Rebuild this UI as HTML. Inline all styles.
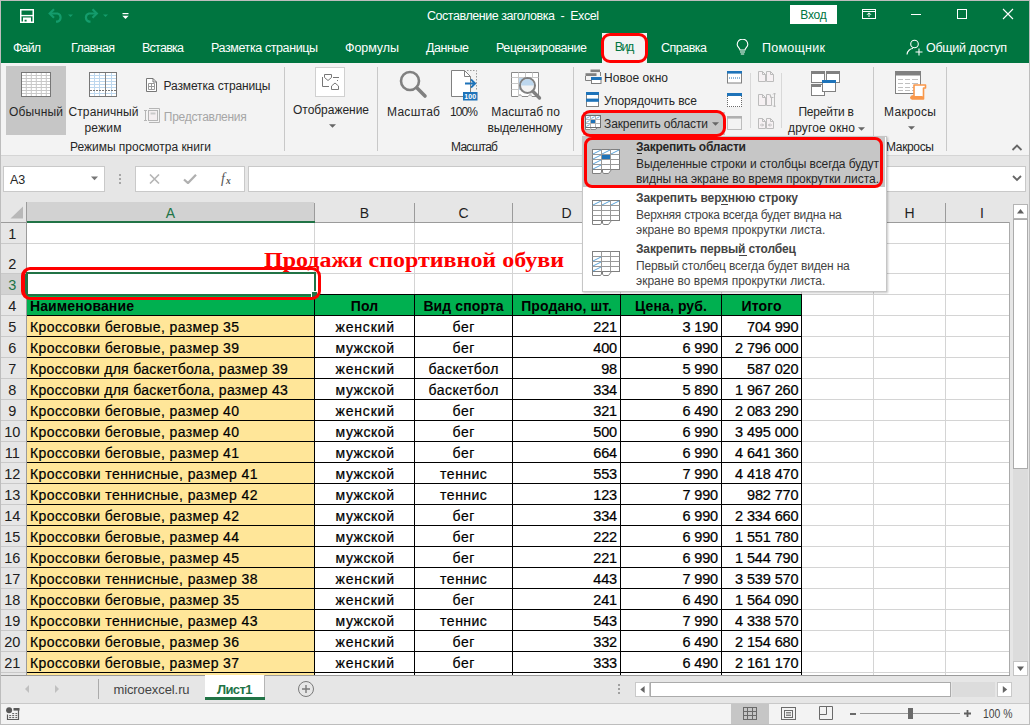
<!DOCTYPE html>
<html lang="ru"><head><meta charset="utf-8"><title>Excel</title>
<style>
html,body{margin:0;padding:0;}
body{width:1030px;height:725px;position:relative;overflow:hidden;background:#fff;font-family:'Liberation Sans', sans-serif;}
#app{position:absolute;left:0;top:0;width:1030px;height:725px;overflow:hidden;}
#app div,#app svg,#app span.t{position:absolute;box-sizing:border-box;}
span.t{white-space:pre;line-height:normal;}
</style></head><body><div id="app">
<div style="left:0px;top:0px;width:1030px;height:725px;background:#f3f3f3;"></div>
<div style="left:0px;top:0px;width:1030px;height:63px;background:#007540;"></div>
<span class="t" style="font:normal 12.5px 'Liberation Sans', sans-serif;color:#ffffff;letter-spacing:-0.456px;left:427.00px;top:8.69px;">Составление заголовка  -  Excel</span>
<div style="left:790px;top:5px;width:47px;height:19px;background:#ffffff;"></div>
<span class="t" style="font:normal 12px 'Liberation Sans', sans-serif;color:#007540;letter-spacing:-0.181px;left:800.19px;top:8.14px;">Вход</span>
<span class="t" style="font:normal 12.5px 'Liberation Sans', sans-serif;color:#ffffff;letter-spacing:-0.911px;left:13.00px;top:40.69px;">Файл</span>
<span class="t" style="font:normal 12.5px 'Liberation Sans', sans-serif;color:#ffffff;letter-spacing:-0.596px;left:71.00px;top:40.69px;">Главная</span>
<span class="t" style="font:normal 12.5px 'Liberation Sans', sans-serif;color:#ffffff;letter-spacing:-0.745px;left:142.00px;top:40.69px;">Вставка</span>
<span class="t" style="font:normal 12.5px 'Liberation Sans', sans-serif;color:#ffffff;letter-spacing:-0.400px;left:211.00px;top:40.69px;">Разметка страницы</span>
<span class="t" style="font:normal 12.5px 'Liberation Sans', sans-serif;color:#ffffff;letter-spacing:-0.068px;left:345.00px;top:40.69px;">Формулы</span>
<span class="t" style="font:normal 12.5px 'Liberation Sans', sans-serif;color:#ffffff;letter-spacing:-0.434px;left:426.00px;top:40.69px;">Данные</span>
<span class="t" style="font:normal 12.5px 'Liberation Sans', sans-serif;color:#ffffff;letter-spacing:-0.425px;left:496.00px;top:40.69px;">Рецензирование</span>
<span class="t" style="font:normal 12.5px 'Liberation Sans', sans-serif;color:#ffffff;letter-spacing:-0.508px;left:661.00px;top:40.69px;">Справка</span>
<span class="t" style="font:normal 12.5px 'Liberation Sans', sans-serif;color:#ffffff;letter-spacing:0.268px;left:762.00px;top:40.69px;">Помощник</span>
<span class="t" style="font:normal 12.5px 'Liberation Sans', sans-serif;color:#ffffff;letter-spacing:-0.271px;left:926.00px;top:40.69px;">Общий доступ</span>
<div style="left:602px;top:33px;width:45px;height:30px;background:#f3f3f3;"></div>
<span class="t" style="font:normal 12.5px 'Liberation Sans', sans-serif;color:#007540;letter-spacing:-1.562px;left:614.70px;top:40.49px;">Вид</span>
<div style="left:0px;top:63px;width:1030px;height:92px;background:#f3f3f3;"></div>
<div style="left:0px;top:155px;width:1030px;height:1px;background:#d5d5d5;"></div>
<div style="left:284px;top:67px;width:1px;height:84px;background:#c8c8c8;"></div>
<div style="left:377px;top:67px;width:1px;height:84px;background:#c8c8c8;"></div>
<div style="left:573px;top:67px;width:1px;height:84px;background:#c8c8c8;"></div>
<div style="left:873px;top:67px;width:1px;height:84px;background:#c8c8c8;"></div>
<div style="left:946px;top:67px;width:1px;height:84px;background:#c8c8c8;"></div>
<div style="left:6px;top:66px;width:60px;height:69px;background:#c6c6c6;"></div>
<span class="t" style="font:normal 12px 'Liberation Sans', sans-serif;color:#262626;letter-spacing:0.159px;left:9.00px;top:104.74px;">Обычный</span>
<span class="t" style="font:normal 12px 'Liberation Sans', sans-serif;color:#262626;letter-spacing:0.106px;left:68.50px;top:104.74px;">Страничный</span>
<span class="t" style="font:normal 12px 'Liberation Sans', sans-serif;color:#262626;letter-spacing:0.199px;left:84.50px;top:120.54px;">режим</span>
<span class="t" style="font:normal 12px 'Liberation Sans', sans-serif;color:#262626;letter-spacing:-0.117px;left:163.50px;top:78.84px;">Разметка страницы</span>
<span class="t" style="font:normal 12px 'Liberation Sans', sans-serif;color:#a6a6a6;letter-spacing:-0.280px;left:163.80px;top:110.14px;">Представления</span>
<span class="t" style="font:normal 12px 'Liberation Sans', sans-serif;color:#262626;letter-spacing:-0.015px;left:70.00px;top:140.14px;">Режимы просмотра книги</span>
<div style="left:315px;top:67px;width:30px;height:30px;background:#ffffff;border:1px solid #d0d0d0;"></div>
<span class="t" style="font:normal 12px 'Liberation Sans', sans-serif;color:#262626;letter-spacing:-0.030px;left:293.00px;top:102.94px;">Отображение</span>
<span class="t" style="font:normal 12px 'Liberation Sans', sans-serif;color:#262626;letter-spacing:0.276px;left:387.00px;top:104.74px;">Масштаб</span>
<span class="t" style="font:normal 12px 'Liberation Sans', sans-serif;color:#262626;letter-spacing:-0.901px;left:450.00px;top:104.74px;">100%</span>
<span class="t" style="font:normal 12px 'Liberation Sans', sans-serif;color:#262626;letter-spacing:0.071px;left:491.35px;top:104.74px;">Масштаб по</span>
<span class="t" style="font:normal 12px 'Liberation Sans', sans-serif;color:#262626;letter-spacing:-0.127px;left:487.50px;top:120.54px;">выделенному</span>
<span class="t" style="font:normal 12px 'Liberation Sans', sans-serif;color:#262626;letter-spacing:-0.724px;left:451.00px;top:140.14px;">Масштаб</span>
<span class="t" style="font:normal 12px 'Liberation Sans', sans-serif;color:#262626;letter-spacing:0.056px;left:604.00px;top:71.14px;">Новое окно</span>
<span class="t" style="font:normal 12px 'Liberation Sans', sans-serif;color:#262626;letter-spacing:-0.047px;left:604.00px;top:94.14px;">Упорядочить все</span>
<div style="left:583px;top:112px;width:142px;height:23px;background:#c6c6c6;"></div>
<span class="t" style="font:normal 12px 'Liberation Sans', sans-serif;color:#262626;letter-spacing:-0.105px;left:604.00px;top:117.14px;">Закрепить области</span>
<span class="t" style="font:normal 12px 'Liberation Sans', sans-serif;color:#262626;letter-spacing:-0.221px;left:798.45px;top:104.74px;">Перейти в</span>
<span class="t" style="font:normal 12px 'Liberation Sans', sans-serif;color:#262626;letter-spacing:0.144px;left:788.00px;top:120.54px;">другое окно</span>
<span class="t" style="font:normal 12px 'Liberation Sans', sans-serif;color:#262626;letter-spacing:0.328px;left:884.00px;top:104.74px;">Макросы</span>
<span class="t" style="font:normal 12px 'Liberation Sans', sans-serif;color:#262626;letter-spacing:-0.339px;left:886.00px;top:140.14px;">Макросы</span>
<svg style="left:20px;top:9px;" width="14" height="14" viewBox="0 0 14 14"><path d="M0.75 0.75H13.25V13.25H0.75Z" fill="none" stroke="#fff" stroke-width="1.5"/><path d="M1 6.6H13" stroke="#fff" stroke-width="1.4"/><path d="M3 8.6H11V13H6.6V10.8H4.6V13H3Z" fill="#fff"/></svg>
<svg style="left:48px;top:8px;" width="26" height="15" viewBox="0 0 26 15"><path d="M2 5.5 H9.5 A4.2 4.2 0 0 1 9.5 13.6 H8" fill="none" stroke="#149c6c" stroke-width="2.2"/><path d="M6 1.2 L1.7 5.5 L6 9.8" fill="none" stroke="#149c6c" stroke-width="2.2"/><path d="M20 6.5 L25 6.5 L22.5 9Z" fill="#149c6c"/></svg>
<svg style="left:83px;top:8px;" width="26" height="15" viewBox="0 0 26 15"><path d="M13.5 5.5 H6 A4.2 4.2 0 0 0 6 13.6 H7.5" fill="none" stroke="#149c6c" stroke-width="2.2"/><path d="M9.5 1.2 L13.8 5.5 L9.5 9.8" fill="none" stroke="#149c6c" stroke-width="2.2"/><path d="M20 6.5 L25 6.5 L22.5 9Z" fill="#149c6c"/></svg>
<svg style="left:122px;top:12px;" width="8" height="8" viewBox="0 0 8 8"><rect x="0.5" y="1" width="6" height="1.2" fill="#fff"/><path d="M0.3 3.8 L6.7 3.8 L3.5 7Z" fill="#fff"/></svg>
<svg style="left:862px;top:8px;" width="15" height="12" viewBox="0 0 15 12"><rect x="0.5" y="1.5" width="13" height="9" fill="none" stroke="#fff"/><path d="M0.5 3.5H13.5" stroke="#fff"/><path d="M7 9V5M5 6.8 L7 4.8 L9 6.8" fill="none" stroke="#fff"/></svg>
<div style="left:911px;top:14px;width:10px;height:1px;background:#ffffff;"></div>
<svg style="left:957px;top:9px;" width="10" height="10" viewBox="0 0 10 10"><rect x="0.5" y="0.5" width="9" height="9" fill="none" stroke="#fff"/></svg>
<svg style="left:1002px;top:8px;" width="12" height="12" viewBox="0 0 12 12"><path d="M1 1L11 11M11 1L1 11" stroke="#fff" stroke-width="1.1"/></svg>
<svg style="left:736px;top:39px;" width="13" height="17" viewBox="0 0 13 17"><path d="M4 11 C4 9 1.2 8 1.2 5.4 A5.3 5.3 0 0 1 11.8 5.4 C11.8 8 9 9 9 11 Z" fill="none" stroke="#fff" stroke-width="1.1"/><path d="M4 13H9M4.8 15H8.2" stroke="#fff" stroke-width="1.1"/></svg>
<svg style="left:906px;top:39px;" width="18" height="17" viewBox="0 0 18 17"><circle cx="8.5" cy="5" r="3.8" fill="none" stroke="#fff" stroke-width="1.1"/><path d="M1 15.5 C1.5 11.5 4.5 9.5 7 9.5" fill="none" stroke="#fff" stroke-width="1.1"/><path d="M9.5 13H16.5M13 9.5V16.5" stroke="#fff" stroke-width="1.1"/></svg>
<svg style="left:21px;top:72px;" width="30" height="25" viewBox="0 0 30 25"><rect x="0.5" y="0.5" width="29" height="24" fill="#fff" stroke="#777"/><rect x="4.8" y="1" width="1" height="23" fill="#c8c8c8"/><rect x="9.8" y="1" width="1" height="23" fill="#c8c8c8"/><rect x="14.8" y="1" width="1" height="23" fill="#c8c8c8"/><rect x="19.8" y="1" width="1" height="23" fill="#c8c8c8"/><rect x="24.8" y="1" width="1" height="23" fill="#c8c8c8"/><rect x="1" y="3.0" width="28" height="1" fill="#c8c8c8"/><rect x="1" y="6.0" width="28" height="1" fill="#c8c8c8"/><rect x="1" y="9.0" width="28" height="1" fill="#c8c8c8"/><rect x="1" y="12.0" width="28" height="1" fill="#c8c8c8"/><rect x="1" y="15.0" width="28" height="1" fill="#c8c8c8"/><rect x="1" y="18.0" width="28" height="1" fill="#c8c8c8"/><rect x="1" y="21.0" width="28" height="1" fill="#c8c8c8"/></svg>
<svg style="left:89px;top:72px;" width="28" height="25" viewBox="0 0 28 25"><rect x="0.5" y="0.5" width="27" height="24" fill="#fff" stroke="#777"/><rect x="5" y="1" width="1" height="23" fill="#bdd7ee"/><rect x="10" y="1" width="1" height="23" fill="#bdd7ee"/><rect x="22" y="1" width="1" height="23" fill="#bdd7ee"/><rect x="1" y="3" width="26" height="1" fill="#bdd7ee"/><rect x="1" y="6" width="26" height="1" fill="#bdd7ee"/><rect x="1" y="9" width="26" height="1" fill="#bdd7ee"/><rect x="1" y="12" width="26" height="1" fill="#bdd7ee"/><rect x="1" y="15" width="26" height="1" fill="#bdd7ee"/><rect x="1" y="21" width="26" height="1" fill="#bdd7ee"/><rect x="16" y="1" width="1" height="23" fill="#858585"/><path d="M1 18.5H27" stroke="#777" stroke-dasharray="2 1"/></svg>
<svg style="left:146px;top:78px;" width="11" height="14" viewBox="0 0 11 14"><path d="M0.5 0.5H7L10.5 4V13.5H0.5Z" fill="#fff" stroke="#777"/><path d="M7 0.5V4H10.5" fill="none" stroke="#777"/><path d="M2.5 5.5H8.5V11.5H2.5ZM5.5 5.5V11.5M2.5 8.5H8.5" fill="none" stroke="#999"/></svg>
<svg style="left:144px;top:107px;" width="17" height="17" viewBox="0 0 17 17"><path d="M1.5 3V14M0 3.5H3M0 13.5H3" stroke="#b5b5b5" fill="none"/><path d="M5 1.5H15.5V15.5H5" fill="none" stroke="#b5b5b5"/><rect x="4.5" y="3.5" width="9" height="10" fill="#f4eef0" stroke="#b5b5b5"/><rect x="6.5" y="5.5" width="5" height="2" fill="#c9c9c9"/></svg>
<svg style="left:321px;top:73px;" width="20" height="18" viewBox="0 0 20 18"><path d="M3.5 1.5H10.5V4.5L7 7.5L3.5 4.5Z" fill="none" stroke="#777"/><path d="M12 4.5H18" stroke="#777"/><path d="M1.5 4V13.5H8" fill="none" stroke="#777"/><path d="M10.5 16.5H17.5V13L14 10L10.5 13Z" fill="none" stroke="#777"/><path d="M16.5 7V9" stroke="#777" stroke-dasharray="1 1"/></svg>
<svg style="left:328.5px;top:123.5px;" width="7" height="4" viewBox="0 0 7 4"><path d="M0 0.3H7L3.5 3.8Z" fill="#666"/></svg>
<svg style="left:398px;top:69px;" width="32" height="32" viewBox="0 0 32 32"><circle cx="12" cy="12" r="9" fill="none" stroke="#808080" stroke-width="2.6"/><path d="M18.8 18.8 L27 27" stroke="#808080" stroke-width="3.6" stroke-linecap="round"/></svg>
<svg style="left:450px;top:69px;" width="29" height="33" viewBox="0 0 29 33"><path d="M1.5 1.5H14.5L20.5 7.5V27.5H1.5Z" fill="#fff" stroke="#808080"/><path d="M14.5 1.5V7.5H20.5" fill="none" stroke="#808080"/><path d="M17 1.5H26.5V22" fill="none" stroke="#999" stroke-dasharray="1.5 1.5"/><path d="M15 14.5H25M21 10.5L25.2 14.5L21 18.5" fill="none" stroke="#1e73b9" stroke-width="1.8"/><rect x="13" y="23" width="14.5" height="8.5" fill="#1e73b9"/><text x="20.2" y="30.2" font-family="Liberation Sans, sans-serif" font-weight="bold" font-size="7" fill="#fff" text-anchor="middle">100</text></svg>
<svg style="left:511px;top:72px;" width="31" height="29" viewBox="0 0 31 29"><path d="M0.5 0.5H27.5V24.5H21L19 22.5L17 24.5H11L9 22.5L7 24.5H0.5Z" fill="#fff" stroke="#8a8a8a"/><path d="M7.5 0.5V24M14.5 0.5V5M21.5 0.5V5M0.5 5.5H27.5M0.5 11.5H8M0.5 17.5H8M20 5.5V24" fill="none" stroke="#c8c8c8"/><rect x="8" y="6" width="12" height="12" fill="#bdd7ee"/><circle cx="16.5" cy="13.5" r="7.5" fill="#f3f3f3" stroke="#808080" stroke-width="2"/><path d="M10 13.5 A6.5 6.5 0 0 1 23 13.5Z" fill="#bdd7ee"/><path d="M22 19.5 L28.5 26" stroke="#808080" stroke-width="3.4" stroke-linecap="round"/></svg>
<svg style="left:584px;top:69px;" width="18" height="16" viewBox="0 0 18 16"><rect x="6.5" y="0.5" width="9.5" height="2.6" fill="#808080"/><path d="M16.5 3V7" stroke="#808080"/><rect x="1.5" y="4.2" width="11" height="2.8" fill="#808080"/><path d="M1.5 7V11.5H7" fill="none" stroke="#808080"/><rect x="7.5" y="8.5" width="9.5" height="6" fill="#fff" stroke="#808080"/><rect x="7" y="8" width="10.5" height="3" fill="#1e73b9"/></svg>
<svg style="left:586px;top:92px;" width="13" height="15" viewBox="0 0 13 15"><rect x="0.5" y="0.5" width="12" height="14" fill="#fff" stroke="#808080"/><rect x="0" y="0" width="13" height="3" fill="#1e73b9"/><rect x="0" y="6.6" width="13" height="3.2" fill="#1e73b9"/></svg>
<svg style="left:727px;top:71px;" width="15" height="13" viewBox="0 0 15 13"><rect x="0.5" y="0.5" width="14" height="11.5" fill="#fff" stroke="#808080"/><rect x="0" y="0" width="15" height="2.6" fill="#1e73b9"/><path d="M2 7H13" stroke="#1e73b9" stroke-dasharray="1 1"/></svg>
<svg style="left:727px;top:93px;" width="15" height="15" viewBox="0 0 15 15"><rect x="0.5" y="0.5" width="14" height="13.5" fill="#fff" stroke="none"/><path d="M0.5 3V14M14.5 3V14" stroke="#6a6a6a" stroke-dasharray="1 1"/><path d="M0 13.5H15" stroke="#6a6a6a" stroke-dasharray="1 1"/><rect x="0" y="0" width="15" height="3" fill="#1e73b9"/></svg>
<svg style="left:727px;top:116px;" width="15" height="14" viewBox="0 0 15 14"><rect x="0.5" y="0.5" width="14" height="13" fill="#f3f3f3" stroke="#bdbdbd"/><rect x="0" y="0" width="15" height="2.6" fill="#b0b0b0"/></svg>
<div style="left:750px;top:73px;width:1px;height:55px;background:#d8d8d8;"></div>
<div style="left:781px;top:73px;width:1px;height:55px;background:#d8d8d8;"></div>
<svg style="left:758px;top:71px;" width="17" height="12" viewBox="0 0 17 12"><path d="M0.5 0.5H4.5L7.5 3.5V10.5H0.5Z M8.5 0.5H12.5L15.5 3.5V10.5H8.5Z" fill="#f6f1f3" stroke="#bcbcbc"/><path d="M4.5 0.5V3.5H7.5M12.5 0.5V3.5H15.5" fill="none" stroke="#bcbcbc"/></svg>
<svg style="left:758px;top:92px;" width="18" height="16" viewBox="0 0 18 16"><path d="M0.5 2.5H4.5L7.5 5.5V13.5H0.5Z M8.5 2.5H11.5L13.5 5.5V13.5H8.5Z" fill="#f6f1f3" stroke="#bcbcbc"/><path d="M4.5 2.5V5.5H7.5M12.5 2.5V5.5H15.5" fill="none" stroke="#bcbcbc"/><path d="M16.5 1V15M15 2.5L16.5 1L18 2.5M15 13.5L16.5 15L18 13.5" fill="none" stroke="#bcbcbc"/></svg>
<svg style="left:758px;top:118px;" width="17" height="12" viewBox="0 0 17 12"><path d="M0.5 0.5H4.5L7.5 3.5V10.5H0.5Z M8.5 0.5H12.5L15.5 3.5V10.5H8.5Z" fill="#f6f1f3" stroke="#bcbcbc"/><path d="M4.5 0.5V3.5H7.5M12.5 0.5V3.5H15.5" fill="none" stroke="#bcbcbc"/><path d="M2 7H5.5M4 5.5L5.5 7L4 8.5M14 7H10.5M12 5.5L10.5 7L12 8.5" fill="none" stroke="#bcbcbc"/></svg>
<svg style="left:811px;top:70px;" width="30" height="27" viewBox="0 0 30 27"><rect x="0.5" y="1.5" width="13" height="11" fill="#fff" stroke="#808080"/><rect x="0" y="1" width="14" height="3" fill="#808080"/><rect x="15.5" y="1.5" width="13" height="11" fill="#fff" stroke="#808080"/><rect x="15" y="1" width="14" height="3" fill="#808080"/><rect x="0.5" y="14.5" width="13" height="11" fill="#fff" stroke="#808080"/><rect x="0" y="14" width="10" height="3" fill="#808080"/><rect x="11.5" y="10.5" width="13" height="11" fill="#fff" stroke="#808080"/><rect x="11" y="10" width="14" height="3" fill="#1e73b9"/></svg>
<svg style="left:857.5px;top:126.5px;" width="7" height="4" viewBox="0 0 7 4"><path d="M0 0.3H7L3.5 3.8Z" fill="#666"/></svg>
<svg style="left:895px;top:71px;" width="32" height="30" viewBox="0 0 32 30"><rect x="0.5" y="0.5" width="25" height="22" fill="#fff" stroke="#808080"/><rect x="0" y="0" width="26" height="4.5" fill="#808080"/><path d="M3 8.5H8M10 8.5H15M17 8.5H23" stroke="#c0c0c0"/><path d="M3 12.5H8M10 12.5H15M17 12.5H23" stroke="#c0c0c0"/><path d="M3 16.5H8M10 16.5H15M17 16.5H23" stroke="#c0c0c0"/><path d="M3 19.5H8M10 19.5H15M17 19.5H23" stroke="#c0c0c0"/><path d="M19 14H30.5V17H28.5V28H17V25H19Z" fill="#fff" stroke="#f9974a" stroke-width="1.6" stroke-linejoin="round"/><path d="M16.5 26.5H27" stroke="#f9974a" stroke-width="3" stroke-linecap="round"/></svg>
<svg style="left:907.5px;top:125.5px;" width="7" height="4" viewBox="0 0 7 4"><path d="M0 0.3H7L3.5 3.8Z" fill="#666"/></svg>
<svg style="left:1011px;top:143px;" width="12" height="8" viewBox="0 0 12 8"><path d="M1.5 7L6 2.5L10.5 7" fill="none" stroke="#666" stroke-width="1.8"/></svg>
<svg style="left:585px;top:115px;" width="16" height="15" viewBox="0 0 16 15"><rect x="0.5" y="0.5" width="15" height="12" fill="#b4b4b4" stroke="#6e6e6e"/><rect x="1" y="1" width="4" height="3" fill="#fff"/><rect x="1" y="5" width="4" height="3" fill="#fff"/><rect x="1" y="9" width="4" height="3" fill="#fff"/><rect x="6" y="1" width="4" height="3" fill="#fff"/><rect x="6" y="5" width="4" height="3" fill="#fff"/><rect x="6" y="9" width="4" height="3" fill="#fff"/><rect x="11" y="1" width="4" height="3" fill="#fff"/><rect x="11" y="5" width="4" height="3" fill="#fff"/><rect x="11" y="9" width="4" height="3" fill="#fff"/><path d="M1.3 3.4 L4.7 1.6" stroke="#5ba3d9" stroke-width="0.9"/><path d="M6.3 3.4 L9.7 1.6" stroke="#5ba3d9" stroke-width="0.9"/><path d="M11.3 3.4 L14.7 1.6" stroke="#5ba3d9" stroke-width="0.9"/><path d="M1.3 7.4 L4.7 5.6" stroke="#5ba3d9" stroke-width="0.9"/><path d="M1.3 11.4 L4.7 9.6" stroke="#5ba3d9" stroke-width="0.9"/><rect x="6" y="5" width="4" height="3" fill="#1e73b9"/><rect x="1" y="13" width="4" height="1.2" fill="#fff"/><rect x="6.5" y="13" width="4" height="1.2" fill="#fff"/><path d="M0.5 12.5V14.6H5.2M6 14.6H10.5L12 13" fill="none" stroke="#7a7a7a" stroke-width="0.9"/></svg>
<svg style="left:711.5px;top:122.0px;" width="7" height="4" viewBox="0 0 7 4"><path d="M0 0.3H7L3.5 3.8Z" fill="#666"/></svg>
<div style="left:0px;top:156px;width:1030px;height:46px;background:#e6e6e6;"></div>
<div style="left:3px;top:166px;width:102px;height:26px;background:#ffffff;border:1px solid #c9c9c9;"></div>
<span class="t" style="font:normal 12.5px 'Liberation Sans', sans-serif;color:#262626;left:10.00px;top:172.69px;">A3</span>
<div style="left:135px;top:166px;width:110px;height:26px;background:#ffffff;border:1px solid #c9c9c9;"></div>
<div style="left:248px;top:166px;width:778px;height:26px;background:#ffffff;border:1px solid #c9c9c9;"></div>
<svg style="left:91px;top:176px;" width="8" height="5" viewBox="0 0 8 5"><path d="M0 0.5H7L3.5 4.2Z" fill="#777"/></svg>
<svg style="left:119px;top:174px;" width="3" height="10" viewBox="0 0 3 10"><rect x="0" y="0" width="2" height="2" fill="#a6a6a6"/><rect x="0" y="4" width="2" height="2" fill="#a6a6a6"/><rect x="0" y="8" width="2" height="2" fill="#a6a6a6"/></svg>
<svg style="left:149px;top:174px;" width="11" height="10" viewBox="0 0 11 10"><path d="M1 0.5L10 9.5M10 0.5L1 9.5" stroke="#b5b5b5" stroke-width="1.6"/></svg>
<svg style="left:183px;top:174px;" width="14" height="10" viewBox="0 0 14 10"><path d="M1 5.5L5 9L13 0.8" fill="none" stroke="#b0b0b0" stroke-width="2.3"/></svg>
<span class="t" style="font:normal 14px 'Liberation Serif', serif;color:#555;left:221.00px;top:171.03px;font-style:italic;">f</span>
<span class="t" style="font:bold 9.5px 'Liberation Serif', serif;color:#555;left:226.00px;top:175.54px;font-style:italic;">x</span>
<svg style="left:1012px;top:175px;" width="10" height="7" viewBox="0 0 10 7"><path d="M1 1L5 5L9 1" fill="none" stroke="#666" stroke-width="1.8"/></svg>
<div style="left:0px;top:202px;width:1010px;height:474px;background:#ffffff;"></div>
<div style="left:0px;top:202px;width:1010px;height:21px;background:#e6e6e6;"></div>
<div style="left:0px;top:202px;width:27px;height:474px;background:#e6e6e6;"></div>
<div style="left:314px;top:223px;width:1px;height:453px;background:#d4d4d4;"></div>
<div style="left:414px;top:223px;width:1px;height:453px;background:#d4d4d4;"></div>
<div style="left:512px;top:223px;width:1px;height:453px;background:#d4d4d4;"></div>
<div style="left:620px;top:223px;width:1px;height:453px;background:#d4d4d4;"></div>
<div style="left:721px;top:223px;width:1px;height:453px;background:#d4d4d4;"></div>
<div style="left:801px;top:223px;width:1px;height:453px;background:#d4d4d4;"></div>
<div style="left:873px;top:223px;width:1px;height:453px;background:#d4d4d4;"></div>
<div style="left:945px;top:223px;width:1px;height:453px;background:#d4d4d4;"></div>
<div style="left:1009px;top:223px;width:1px;height:453px;background:#d4d4d4;"></div>
<div style="left:27px;top:243px;width:983px;height:1px;background:#d4d4d4;"></div>
<div style="left:27px;top:273px;width:983px;height:1px;background:#d4d4d4;"></div>
<div style="left:27px;top:294px;width:983px;height:1px;background:#d4d4d4;"></div>
<div style="left:27px;top:315px;width:983px;height:1px;background:#d4d4d4;"></div>
<div style="left:27px;top:336px;width:983px;height:1px;background:#d4d4d4;"></div>
<div style="left:27px;top:357px;width:983px;height:1px;background:#d4d4d4;"></div>
<div style="left:27px;top:378px;width:983px;height:1px;background:#d4d4d4;"></div>
<div style="left:27px;top:399px;width:983px;height:1px;background:#d4d4d4;"></div>
<div style="left:27px;top:420px;width:983px;height:1px;background:#d4d4d4;"></div>
<div style="left:27px;top:441px;width:983px;height:1px;background:#d4d4d4;"></div>
<div style="left:27px;top:462px;width:983px;height:1px;background:#d4d4d4;"></div>
<div style="left:27px;top:483px;width:983px;height:1px;background:#d4d4d4;"></div>
<div style="left:27px;top:504px;width:983px;height:1px;background:#d4d4d4;"></div>
<div style="left:27px;top:525px;width:983px;height:1px;background:#d4d4d4;"></div>
<div style="left:27px;top:546px;width:983px;height:1px;background:#d4d4d4;"></div>
<div style="left:27px;top:567px;width:983px;height:1px;background:#d4d4d4;"></div>
<div style="left:27px;top:588px;width:983px;height:1px;background:#d4d4d4;"></div>
<div style="left:27px;top:609px;width:983px;height:1px;background:#d4d4d4;"></div>
<div style="left:27px;top:630px;width:983px;height:1px;background:#d4d4d4;"></div>
<div style="left:27px;top:651px;width:983px;height:1px;background:#d4d4d4;"></div>
<div style="left:27px;top:672px;width:983px;height:1px;background:#d4d4d4;"></div>
<div style="left:0px;top:222px;width:1010px;height:1px;background:#9b9b9b;"></div>
<div style="left:26px;top:202px;width:1px;height:474px;background:#9b9b9b;"></div>
<div style="left:314px;top:203px;width:1px;height:19px;background:#9b9b9b;"></div>
<div style="left:414px;top:203px;width:1px;height:19px;background:#9b9b9b;"></div>
<div style="left:512px;top:203px;width:1px;height:19px;background:#9b9b9b;"></div>
<div style="left:620px;top:203px;width:1px;height:19px;background:#9b9b9b;"></div>
<div style="left:721px;top:203px;width:1px;height:19px;background:#9b9b9b;"></div>
<div style="left:801px;top:203px;width:1px;height:19px;background:#9b9b9b;"></div>
<div style="left:873px;top:203px;width:1px;height:19px;background:#9b9b9b;"></div>
<div style="left:945px;top:203px;width:1px;height:19px;background:#9b9b9b;"></div>
<div style="left:27px;top:202px;width:287px;height:19px;background:#d2d2d2;"></div>
<div style="left:27px;top:221px;width:288px;height:2px;background:#217346;"></div>
<div style="left:0px;top:274px;width:25px;height:20px;background:#d2d2d2;"></div>
<div style="left:25px;top:274px;width:2px;height:21px;background:#217346;"></div>
<span class="t" style="font:normal 14px 'Liberation Sans', sans-serif;color:#217346;left:165.83px;top:204.93px;">A</span>
<span class="t" style="font:normal 14px 'Liberation Sans', sans-serif;color:#1f1f1f;left:359.83px;top:204.93px;">B</span>
<span class="t" style="font:normal 14px 'Liberation Sans', sans-serif;color:#1f1f1f;left:458.44px;top:204.93px;">C</span>
<span class="t" style="font:normal 14px 'Liberation Sans', sans-serif;color:#1f1f1f;left:561.44px;top:204.93px;">D</span>
<span class="t" style="font:normal 14px 'Liberation Sans', sans-serif;color:#1f1f1f;left:666.33px;top:204.93px;">E</span>
<span class="t" style="font:normal 14px 'Liberation Sans', sans-serif;color:#1f1f1f;left:757.22px;top:204.93px;">F</span>
<span class="t" style="font:normal 14px 'Liberation Sans', sans-serif;color:#1f1f1f;left:832.05px;top:204.93px;">G</span>
<span class="t" style="font:normal 14px 'Liberation Sans', sans-serif;color:#1f1f1f;left:904.44px;top:204.93px;">H</span>
<span class="t" style="font:normal 14px 'Liberation Sans', sans-serif;color:#1f1f1f;left:980.05px;top:204.93px;">I</span>
<span class="t" style="font:normal 14.5px 'Liberation Sans', sans-serif;color:#202020;letter-spacing:0.000px;left:8.26px;top:225.68px;">1</span>
<span class="t" style="font:normal 14.5px 'Liberation Sans', sans-serif;color:#202020;letter-spacing:0.000px;left:8.26px;top:255.68px;">2</span>
<span class="t" style="font:normal 14.5px 'Liberation Sans', sans-serif;color:#217346;letter-spacing:0.000px;left:8.26px;top:276.68px;">3</span>
<span class="t" style="font:normal 14.5px 'Liberation Sans', sans-serif;color:#202020;letter-spacing:0.000px;left:8.26px;top:297.68px;">4</span>
<span class="t" style="font:normal 14.5px 'Liberation Sans', sans-serif;color:#202020;letter-spacing:0.000px;left:8.26px;top:318.68px;">5</span>
<span class="t" style="font:normal 14.5px 'Liberation Sans', sans-serif;color:#202020;letter-spacing:0.000px;left:8.26px;top:339.68px;">6</span>
<span class="t" style="font:normal 14.5px 'Liberation Sans', sans-serif;color:#202020;letter-spacing:0.000px;left:8.26px;top:360.68px;">7</span>
<span class="t" style="font:normal 14.5px 'Liberation Sans', sans-serif;color:#202020;letter-spacing:0.000px;left:8.26px;top:381.68px;">8</span>
<span class="t" style="font:normal 14.5px 'Liberation Sans', sans-serif;color:#202020;letter-spacing:0.000px;left:8.26px;top:402.68px;">9</span>
<span class="t" style="font:normal 14.5px 'Liberation Sans', sans-serif;color:#202020;letter-spacing:0.000px;left:4.23px;top:423.68px;">10</span>
<span class="t" style="font:normal 14.5px 'Liberation Sans', sans-serif;color:#202020;letter-spacing:0.000px;left:4.77px;top:444.68px;">11</span>
<span class="t" style="font:normal 14.5px 'Liberation Sans', sans-serif;color:#202020;letter-spacing:0.000px;left:4.23px;top:465.68px;">12</span>
<span class="t" style="font:normal 14.5px 'Liberation Sans', sans-serif;color:#202020;letter-spacing:0.000px;left:4.23px;top:486.68px;">13</span>
<span class="t" style="font:normal 14.5px 'Liberation Sans', sans-serif;color:#202020;letter-spacing:0.000px;left:4.23px;top:507.68px;">14</span>
<span class="t" style="font:normal 14.5px 'Liberation Sans', sans-serif;color:#202020;letter-spacing:0.000px;left:4.23px;top:528.68px;">15</span>
<span class="t" style="font:normal 14.5px 'Liberation Sans', sans-serif;color:#202020;letter-spacing:0.000px;left:4.23px;top:549.68px;">16</span>
<span class="t" style="font:normal 14.5px 'Liberation Sans', sans-serif;color:#202020;letter-spacing:0.000px;left:4.23px;top:570.68px;">17</span>
<span class="t" style="font:normal 14.5px 'Liberation Sans', sans-serif;color:#202020;letter-spacing:0.000px;left:4.23px;top:591.68px;">18</span>
<span class="t" style="font:normal 14.5px 'Liberation Sans', sans-serif;color:#202020;letter-spacing:0.000px;left:4.23px;top:612.68px;">19</span>
<span class="t" style="font:normal 14.5px 'Liberation Sans', sans-serif;color:#202020;letter-spacing:0.000px;left:4.23px;top:633.68px;">20</span>
<span class="t" style="font:normal 14.5px 'Liberation Sans', sans-serif;color:#202020;letter-spacing:0.000px;left:4.23px;top:654.68px;">21</span>
<div style="left:0px;top:243px;width:26px;height:1px;background:#c9c9c9;"></div>
<div style="left:0px;top:273px;width:26px;height:1px;background:#c9c9c9;"></div>
<div style="left:0px;top:294px;width:26px;height:1px;background:#c9c9c9;"></div>
<div style="left:0px;top:315px;width:26px;height:1px;background:#c9c9c9;"></div>
<div style="left:0px;top:336px;width:26px;height:1px;background:#c9c9c9;"></div>
<div style="left:0px;top:357px;width:26px;height:1px;background:#c9c9c9;"></div>
<div style="left:0px;top:378px;width:26px;height:1px;background:#c9c9c9;"></div>
<div style="left:0px;top:399px;width:26px;height:1px;background:#c9c9c9;"></div>
<div style="left:0px;top:420px;width:26px;height:1px;background:#c9c9c9;"></div>
<div style="left:0px;top:441px;width:26px;height:1px;background:#c9c9c9;"></div>
<div style="left:0px;top:462px;width:26px;height:1px;background:#c9c9c9;"></div>
<div style="left:0px;top:483px;width:26px;height:1px;background:#c9c9c9;"></div>
<div style="left:0px;top:504px;width:26px;height:1px;background:#c9c9c9;"></div>
<div style="left:0px;top:525px;width:26px;height:1px;background:#c9c9c9;"></div>
<div style="left:0px;top:546px;width:26px;height:1px;background:#c9c9c9;"></div>
<div style="left:0px;top:567px;width:26px;height:1px;background:#c9c9c9;"></div>
<div style="left:0px;top:588px;width:26px;height:1px;background:#c9c9c9;"></div>
<div style="left:0px;top:609px;width:26px;height:1px;background:#c9c9c9;"></div>
<div style="left:0px;top:630px;width:26px;height:1px;background:#c9c9c9;"></div>
<div style="left:0px;top:651px;width:26px;height:1px;background:#c9c9c9;"></div>
<div style="left:0px;top:672px;width:26px;height:1px;background:#c9c9c9;"></div>
<svg style="left:10px;top:206px;" width="14" height="13" viewBox="0 0 14 13"><path d="M13 0.5V12.5H0.5Z" fill="#b8b8b8"/></svg>
<div style="left:27px;top:295px;width:775px;height:20px;background:#00b050;"></div>
<div style="left:27px;top:316px;width:287px;height:360px;background:#ffe699;"></div>
<div style="left:27px;top:294px;width:775px;height:1px;background:#000000;"></div>
<div style="left:27px;top:315px;width:775px;height:1px;background:#000000;"></div>
<div style="left:27px;top:336px;width:775px;height:1px;background:#000000;"></div>
<div style="left:27px;top:357px;width:775px;height:1px;background:#000000;"></div>
<div style="left:27px;top:378px;width:775px;height:1px;background:#000000;"></div>
<div style="left:27px;top:399px;width:775px;height:1px;background:#000000;"></div>
<div style="left:27px;top:420px;width:775px;height:1px;background:#000000;"></div>
<div style="left:27px;top:441px;width:775px;height:1px;background:#000000;"></div>
<div style="left:27px;top:462px;width:775px;height:1px;background:#000000;"></div>
<div style="left:27px;top:483px;width:775px;height:1px;background:#000000;"></div>
<div style="left:27px;top:504px;width:775px;height:1px;background:#000000;"></div>
<div style="left:27px;top:525px;width:775px;height:1px;background:#000000;"></div>
<div style="left:27px;top:546px;width:775px;height:1px;background:#000000;"></div>
<div style="left:27px;top:567px;width:775px;height:1px;background:#000000;"></div>
<div style="left:27px;top:588px;width:775px;height:1px;background:#000000;"></div>
<div style="left:27px;top:609px;width:775px;height:1px;background:#000000;"></div>
<div style="left:27px;top:630px;width:775px;height:1px;background:#000000;"></div>
<div style="left:27px;top:651px;width:775px;height:1px;background:#000000;"></div>
<div style="left:27px;top:672px;width:775px;height:1px;background:#000000;"></div>
<div style="left:314px;top:294px;width:1px;height:382px;background:#000000;"></div>
<div style="left:414px;top:294px;width:1px;height:382px;background:#000000;"></div>
<div style="left:512px;top:294px;width:1px;height:382px;background:#000000;"></div>
<div style="left:620px;top:294px;width:1px;height:382px;background:#000000;"></div>
<div style="left:721px;top:294px;width:1px;height:382px;background:#000000;"></div>
<div style="left:801px;top:294px;width:1px;height:382px;background:#000000;"></div>
<span class="t" style="font:bold 14px 'Liberation Sans', sans-serif;color:#000;letter-spacing:0.112px;left:30.00px;top:298.33px;">Наименование</span>
<span class="t" style="font:bold 14px 'Liberation Sans', sans-serif;color:#000;letter-spacing:0.163px;left:350.75px;top:298.33px;">Пол</span>
<span class="t" style="font:bold 14px 'Liberation Sans', sans-serif;color:#000;letter-spacing:0.106px;left:423.38px;top:298.33px;">Вид спорта</span>
<span class="t" style="font:bold 14px 'Liberation Sans', sans-serif;color:#000;letter-spacing:0.098px;left:521.14px;top:298.33px;">Продано, шт.</span>
<span class="t" style="font:bold 14px 'Liberation Sans', sans-serif;color:#000;letter-spacing:0.095px;left:635.12px;top:298.33px;">Цена, руб.</span>
<span class="t" style="font:bold 14px 'Liberation Sans', sans-serif;color:#000;letter-spacing:0.118px;left:741.52px;top:298.33px;">Итого</span>
<span class="t" style="font:normal 14px 'Liberation Sans', sans-serif;color:#000;letter-spacing:0.383px;left:30.00px;top:319.33px;-webkit-text-stroke:0.22px #000;">Кроссовки беговые, размер 35</span>
<span class="t" style="font:normal 14px 'Liberation Sans', sans-serif;color:#000;letter-spacing:0.791px;left:335.60px;top:319.33px;-webkit-text-stroke:0.22px #000;">женский</span>
<span class="t" style="font:normal 14px 'Liberation Sans', sans-serif;color:#000;letter-spacing:0.571px;left:452.55px;top:319.33px;-webkit-text-stroke:0.22px #000;">бег</span>
<span class="t" style="font:normal 14.5px 'Liberation Sans', sans-serif;color:#000;letter-spacing:-0.182px;left:593.36px;top:318.88px;-webkit-text-stroke:0.22px #000;">221</span>
<span class="t" style="font:normal 14.5px 'Liberation Sans', sans-serif;color:#000;letter-spacing:-0.136px;left:682.45px;top:318.88px;-webkit-text-stroke:0.22px #000;">3 190</span>
<span class="t" style="font:normal 14.5px 'Liberation Sans', sans-serif;color:#000;letter-spacing:-0.131px;left:746.96px;top:318.88px;-webkit-text-stroke:0.22px #000;">704 990</span>
<span class="t" style="font:normal 14px 'Liberation Sans', sans-serif;color:#000;letter-spacing:0.383px;left:30.00px;top:340.33px;-webkit-text-stroke:0.22px #000;">Кроссовки беговые, размер 39</span>
<span class="t" style="font:normal 14px 'Liberation Sans', sans-serif;color:#000;letter-spacing:0.533px;left:335.60px;top:340.33px;-webkit-text-stroke:0.22px #000;">мужской</span>
<span class="t" style="font:normal 14px 'Liberation Sans', sans-serif;color:#000;letter-spacing:0.571px;left:452.55px;top:340.33px;-webkit-text-stroke:0.22px #000;">бег</span>
<span class="t" style="font:normal 14.5px 'Liberation Sans', sans-serif;color:#000;letter-spacing:-0.182px;left:593.36px;top:339.88px;-webkit-text-stroke:0.22px #000;">400</span>
<span class="t" style="font:normal 14.5px 'Liberation Sans', sans-serif;color:#000;letter-spacing:-0.136px;left:682.45px;top:339.88px;-webkit-text-stroke:0.22px #000;">6 990</span>
<span class="t" style="font:normal 14.5px 'Liberation Sans', sans-serif;color:#000;letter-spacing:-0.121px;left:735.05px;top:339.88px;-webkit-text-stroke:0.22px #000;">2 796 000</span>
<span class="t" style="font:normal 14px 'Liberation Sans', sans-serif;color:#000;letter-spacing:0.320px;left:30.00px;top:361.33px;-webkit-text-stroke:0.22px #000;">Кроссовки для баскетбола, размер 39</span>
<span class="t" style="font:normal 14px 'Liberation Sans', sans-serif;color:#000;letter-spacing:0.791px;left:335.60px;top:361.33px;-webkit-text-stroke:0.22px #000;">женский</span>
<span class="t" style="font:normal 14px 'Liberation Sans', sans-serif;color:#000;letter-spacing:0.455px;left:428.59px;top:361.33px;-webkit-text-stroke:0.22px #000;">баскетбол</span>
<span class="t" style="font:normal 14.5px 'Liberation Sans', sans-serif;color:#000;letter-spacing:-0.242px;left:601.30px;top:360.88px;-webkit-text-stroke:0.22px #000;">98</span>
<span class="t" style="font:normal 14.5px 'Liberation Sans', sans-serif;color:#000;letter-spacing:-0.136px;left:682.45px;top:360.88px;-webkit-text-stroke:0.22px #000;">5 990</span>
<span class="t" style="font:normal 14.5px 'Liberation Sans', sans-serif;color:#000;letter-spacing:-0.131px;left:746.96px;top:360.88px;-webkit-text-stroke:0.22px #000;">587 020</span>
<span class="t" style="font:normal 14px 'Liberation Sans', sans-serif;color:#000;letter-spacing:0.320px;left:30.00px;top:382.33px;-webkit-text-stroke:0.22px #000;">Кроссовки для баскетбола, размер 43</span>
<span class="t" style="font:normal 14px 'Liberation Sans', sans-serif;color:#000;letter-spacing:0.533px;left:335.60px;top:382.33px;-webkit-text-stroke:0.22px #000;">мужской</span>
<span class="t" style="font:normal 14px 'Liberation Sans', sans-serif;color:#000;letter-spacing:0.455px;left:428.59px;top:382.33px;-webkit-text-stroke:0.22px #000;">баскетбол</span>
<span class="t" style="font:normal 14.5px 'Liberation Sans', sans-serif;color:#000;letter-spacing:-0.182px;left:593.36px;top:381.88px;-webkit-text-stroke:0.22px #000;">334</span>
<span class="t" style="font:normal 14.5px 'Liberation Sans', sans-serif;color:#000;letter-spacing:-0.136px;left:682.45px;top:381.88px;-webkit-text-stroke:0.22px #000;">5 890</span>
<span class="t" style="font:normal 14.5px 'Liberation Sans', sans-serif;color:#000;letter-spacing:-0.121px;left:735.05px;top:381.88px;-webkit-text-stroke:0.22px #000;">1 967 260</span>
<span class="t" style="font:normal 14px 'Liberation Sans', sans-serif;color:#000;letter-spacing:0.383px;left:30.00px;top:403.33px;-webkit-text-stroke:0.22px #000;">Кроссовки беговые, размер 40</span>
<span class="t" style="font:normal 14px 'Liberation Sans', sans-serif;color:#000;letter-spacing:0.791px;left:335.60px;top:403.33px;-webkit-text-stroke:0.22px #000;">женский</span>
<span class="t" style="font:normal 14px 'Liberation Sans', sans-serif;color:#000;letter-spacing:0.571px;left:452.55px;top:403.33px;-webkit-text-stroke:0.22px #000;">бег</span>
<span class="t" style="font:normal 14.5px 'Liberation Sans', sans-serif;color:#000;letter-spacing:-0.182px;left:593.36px;top:402.88px;-webkit-text-stroke:0.22px #000;">321</span>
<span class="t" style="font:normal 14.5px 'Liberation Sans', sans-serif;color:#000;letter-spacing:-0.136px;left:682.45px;top:402.88px;-webkit-text-stroke:0.22px #000;">6 490</span>
<span class="t" style="font:normal 14.5px 'Liberation Sans', sans-serif;color:#000;letter-spacing:-0.121px;left:735.05px;top:402.88px;-webkit-text-stroke:0.22px #000;">2 083 290</span>
<span class="t" style="font:normal 14px 'Liberation Sans', sans-serif;color:#000;letter-spacing:0.383px;left:30.00px;top:424.33px;-webkit-text-stroke:0.22px #000;">Кроссовки беговые, размер 40</span>
<span class="t" style="font:normal 14px 'Liberation Sans', sans-serif;color:#000;letter-spacing:0.533px;left:335.60px;top:424.33px;-webkit-text-stroke:0.22px #000;">мужской</span>
<span class="t" style="font:normal 14px 'Liberation Sans', sans-serif;color:#000;letter-spacing:0.571px;left:452.55px;top:424.33px;-webkit-text-stroke:0.22px #000;">бег</span>
<span class="t" style="font:normal 14.5px 'Liberation Sans', sans-serif;color:#000;letter-spacing:-0.182px;left:593.36px;top:423.88px;-webkit-text-stroke:0.22px #000;">500</span>
<span class="t" style="font:normal 14.5px 'Liberation Sans', sans-serif;color:#000;letter-spacing:-0.136px;left:682.45px;top:423.88px;-webkit-text-stroke:0.22px #000;">6 990</span>
<span class="t" style="font:normal 14.5px 'Liberation Sans', sans-serif;color:#000;letter-spacing:-0.121px;left:735.05px;top:423.88px;-webkit-text-stroke:0.22px #000;">3 495 000</span>
<span class="t" style="font:normal 14px 'Liberation Sans', sans-serif;color:#000;letter-spacing:0.383px;left:30.00px;top:445.33px;-webkit-text-stroke:0.22px #000;">Кроссовки беговые, размер 41</span>
<span class="t" style="font:normal 14px 'Liberation Sans', sans-serif;color:#000;letter-spacing:0.533px;left:335.60px;top:445.33px;-webkit-text-stroke:0.22px #000;">мужской</span>
<span class="t" style="font:normal 14px 'Liberation Sans', sans-serif;color:#000;letter-spacing:0.571px;left:452.55px;top:445.33px;-webkit-text-stroke:0.22px #000;">бег</span>
<span class="t" style="font:normal 14.5px 'Liberation Sans', sans-serif;color:#000;letter-spacing:-0.182px;left:593.36px;top:444.88px;-webkit-text-stroke:0.22px #000;">664</span>
<span class="t" style="font:normal 14.5px 'Liberation Sans', sans-serif;color:#000;letter-spacing:-0.136px;left:682.45px;top:444.88px;-webkit-text-stroke:0.22px #000;">6 990</span>
<span class="t" style="font:normal 14.5px 'Liberation Sans', sans-serif;color:#000;letter-spacing:-0.121px;left:735.05px;top:444.88px;-webkit-text-stroke:0.22px #000;">4 641 360</span>
<span class="t" style="font:normal 14px 'Liberation Sans', sans-serif;color:#000;letter-spacing:0.430px;left:30.00px;top:466.33px;-webkit-text-stroke:0.22px #000;">Кроссовки теннисные, размер 41</span>
<span class="t" style="font:normal 14px 'Liberation Sans', sans-serif;color:#000;letter-spacing:0.533px;left:335.60px;top:466.33px;-webkit-text-stroke:0.22px #000;">мужской</span>
<span class="t" style="font:normal 14px 'Liberation Sans', sans-serif;color:#000;letter-spacing:0.488px;left:440.12px;top:466.33px;-webkit-text-stroke:0.22px #000;">теннис</span>
<span class="t" style="font:normal 14.5px 'Liberation Sans', sans-serif;color:#000;letter-spacing:-0.182px;left:593.36px;top:465.88px;-webkit-text-stroke:0.22px #000;">553</span>
<span class="t" style="font:normal 14.5px 'Liberation Sans', sans-serif;color:#000;letter-spacing:-0.136px;left:682.45px;top:465.88px;-webkit-text-stroke:0.22px #000;">7 990</span>
<span class="t" style="font:normal 14.5px 'Liberation Sans', sans-serif;color:#000;letter-spacing:-0.121px;left:735.05px;top:465.88px;-webkit-text-stroke:0.22px #000;">4 418 470</span>
<span class="t" style="font:normal 14px 'Liberation Sans', sans-serif;color:#000;letter-spacing:0.430px;left:30.00px;top:487.33px;-webkit-text-stroke:0.22px #000;">Кроссовки теннисные, размер 42</span>
<span class="t" style="font:normal 14px 'Liberation Sans', sans-serif;color:#000;letter-spacing:0.533px;left:335.60px;top:487.33px;-webkit-text-stroke:0.22px #000;">мужской</span>
<span class="t" style="font:normal 14px 'Liberation Sans', sans-serif;color:#000;letter-spacing:0.488px;left:440.12px;top:487.33px;-webkit-text-stroke:0.22px #000;">теннис</span>
<span class="t" style="font:normal 14.5px 'Liberation Sans', sans-serif;color:#000;letter-spacing:-0.182px;left:593.36px;top:486.88px;-webkit-text-stroke:0.22px #000;">123</span>
<span class="t" style="font:normal 14.5px 'Liberation Sans', sans-serif;color:#000;letter-spacing:-0.136px;left:682.45px;top:486.88px;-webkit-text-stroke:0.22px #000;">7 990</span>
<span class="t" style="font:normal 14.5px 'Liberation Sans', sans-serif;color:#000;letter-spacing:-0.131px;left:746.96px;top:486.88px;-webkit-text-stroke:0.22px #000;">982 770</span>
<span class="t" style="font:normal 14px 'Liberation Sans', sans-serif;color:#000;letter-spacing:0.383px;left:30.00px;top:508.33px;-webkit-text-stroke:0.22px #000;">Кроссовки беговые, размер 42</span>
<span class="t" style="font:normal 14px 'Liberation Sans', sans-serif;color:#000;letter-spacing:0.533px;left:335.60px;top:508.33px;-webkit-text-stroke:0.22px #000;">мужской</span>
<span class="t" style="font:normal 14px 'Liberation Sans', sans-serif;color:#000;letter-spacing:0.571px;left:452.55px;top:508.33px;-webkit-text-stroke:0.22px #000;">бег</span>
<span class="t" style="font:normal 14.5px 'Liberation Sans', sans-serif;color:#000;letter-spacing:-0.182px;left:593.36px;top:507.88px;-webkit-text-stroke:0.22px #000;">334</span>
<span class="t" style="font:normal 14.5px 'Liberation Sans', sans-serif;color:#000;letter-spacing:-0.136px;left:682.45px;top:507.88px;-webkit-text-stroke:0.22px #000;">6 990</span>
<span class="t" style="font:normal 14.5px 'Liberation Sans', sans-serif;color:#000;letter-spacing:-0.121px;left:735.05px;top:507.88px;-webkit-text-stroke:0.22px #000;">2 334 660</span>
<span class="t" style="font:normal 14px 'Liberation Sans', sans-serif;color:#000;letter-spacing:0.383px;left:30.00px;top:529.33px;-webkit-text-stroke:0.22px #000;">Кроссовки беговые, размер 44</span>
<span class="t" style="font:normal 14px 'Liberation Sans', sans-serif;color:#000;letter-spacing:0.533px;left:335.60px;top:529.33px;-webkit-text-stroke:0.22px #000;">мужской</span>
<span class="t" style="font:normal 14px 'Liberation Sans', sans-serif;color:#000;letter-spacing:0.571px;left:452.55px;top:529.33px;-webkit-text-stroke:0.22px #000;">бег</span>
<span class="t" style="font:normal 14.5px 'Liberation Sans', sans-serif;color:#000;letter-spacing:-0.182px;left:593.36px;top:528.88px;-webkit-text-stroke:0.22px #000;">222</span>
<span class="t" style="font:normal 14.5px 'Liberation Sans', sans-serif;color:#000;letter-spacing:-0.136px;left:682.45px;top:528.88px;-webkit-text-stroke:0.22px #000;">6 990</span>
<span class="t" style="font:normal 14.5px 'Liberation Sans', sans-serif;color:#000;letter-spacing:-0.121px;left:735.05px;top:528.88px;-webkit-text-stroke:0.22px #000;">1 551 780</span>
<span class="t" style="font:normal 14px 'Liberation Sans', sans-serif;color:#000;letter-spacing:0.383px;left:30.00px;top:550.33px;-webkit-text-stroke:0.22px #000;">Кроссовки беговые, размер 45</span>
<span class="t" style="font:normal 14px 'Liberation Sans', sans-serif;color:#000;letter-spacing:0.533px;left:335.60px;top:550.33px;-webkit-text-stroke:0.22px #000;">мужской</span>
<span class="t" style="font:normal 14px 'Liberation Sans', sans-serif;color:#000;letter-spacing:0.571px;left:452.55px;top:550.33px;-webkit-text-stroke:0.22px #000;">бег</span>
<span class="t" style="font:normal 14.5px 'Liberation Sans', sans-serif;color:#000;letter-spacing:-0.182px;left:593.36px;top:549.88px;-webkit-text-stroke:0.22px #000;">221</span>
<span class="t" style="font:normal 14.5px 'Liberation Sans', sans-serif;color:#000;letter-spacing:-0.136px;left:682.45px;top:549.88px;-webkit-text-stroke:0.22px #000;">6 990</span>
<span class="t" style="font:normal 14.5px 'Liberation Sans', sans-serif;color:#000;letter-spacing:-0.121px;left:735.05px;top:549.88px;-webkit-text-stroke:0.22px #000;">1 544 790</span>
<span class="t" style="font:normal 14px 'Liberation Sans', sans-serif;color:#000;letter-spacing:0.430px;left:30.00px;top:571.33px;-webkit-text-stroke:0.22px #000;">Кроссовки теннисные, размер 38</span>
<span class="t" style="font:normal 14px 'Liberation Sans', sans-serif;color:#000;letter-spacing:0.791px;left:335.60px;top:571.33px;-webkit-text-stroke:0.22px #000;">женский</span>
<span class="t" style="font:normal 14px 'Liberation Sans', sans-serif;color:#000;letter-spacing:0.488px;left:440.12px;top:571.33px;-webkit-text-stroke:0.22px #000;">теннис</span>
<span class="t" style="font:normal 14.5px 'Liberation Sans', sans-serif;color:#000;letter-spacing:-0.182px;left:593.36px;top:570.88px;-webkit-text-stroke:0.22px #000;">443</span>
<span class="t" style="font:normal 14.5px 'Liberation Sans', sans-serif;color:#000;letter-spacing:-0.136px;left:682.45px;top:570.88px;-webkit-text-stroke:0.22px #000;">7 990</span>
<span class="t" style="font:normal 14.5px 'Liberation Sans', sans-serif;color:#000;letter-spacing:-0.121px;left:735.05px;top:570.88px;-webkit-text-stroke:0.22px #000;">3 539 570</span>
<span class="t" style="font:normal 14px 'Liberation Sans', sans-serif;color:#000;letter-spacing:0.383px;left:30.00px;top:592.33px;-webkit-text-stroke:0.22px #000;">Кроссовки беговые, размер 35</span>
<span class="t" style="font:normal 14px 'Liberation Sans', sans-serif;color:#000;letter-spacing:0.791px;left:335.60px;top:592.33px;-webkit-text-stroke:0.22px #000;">женский</span>
<span class="t" style="font:normal 14px 'Liberation Sans', sans-serif;color:#000;letter-spacing:0.571px;left:452.55px;top:592.33px;-webkit-text-stroke:0.22px #000;">бег</span>
<span class="t" style="font:normal 14.5px 'Liberation Sans', sans-serif;color:#000;letter-spacing:-0.182px;left:593.36px;top:591.88px;-webkit-text-stroke:0.22px #000;">241</span>
<span class="t" style="font:normal 14.5px 'Liberation Sans', sans-serif;color:#000;letter-spacing:-0.136px;left:682.45px;top:591.88px;-webkit-text-stroke:0.22px #000;">6 490</span>
<span class="t" style="font:normal 14.5px 'Liberation Sans', sans-serif;color:#000;letter-spacing:-0.121px;left:735.05px;top:591.88px;-webkit-text-stroke:0.22px #000;">1 564 090</span>
<span class="t" style="font:normal 14px 'Liberation Sans', sans-serif;color:#000;letter-spacing:0.430px;left:30.00px;top:613.33px;-webkit-text-stroke:0.22px #000;">Кроссовки теннисные, размер 43</span>
<span class="t" style="font:normal 14px 'Liberation Sans', sans-serif;color:#000;letter-spacing:0.533px;left:335.60px;top:613.33px;-webkit-text-stroke:0.22px #000;">мужской</span>
<span class="t" style="font:normal 14px 'Liberation Sans', sans-serif;color:#000;letter-spacing:0.488px;left:440.12px;top:613.33px;-webkit-text-stroke:0.22px #000;">теннис</span>
<span class="t" style="font:normal 14.5px 'Liberation Sans', sans-serif;color:#000;letter-spacing:-0.182px;left:593.36px;top:612.88px;-webkit-text-stroke:0.22px #000;">543</span>
<span class="t" style="font:normal 14.5px 'Liberation Sans', sans-serif;color:#000;letter-spacing:-0.136px;left:682.45px;top:612.88px;-webkit-text-stroke:0.22px #000;">7 990</span>
<span class="t" style="font:normal 14.5px 'Liberation Sans', sans-serif;color:#000;letter-spacing:-0.121px;left:735.05px;top:612.88px;-webkit-text-stroke:0.22px #000;">4 338 570</span>
<span class="t" style="font:normal 14px 'Liberation Sans', sans-serif;color:#000;letter-spacing:0.383px;left:30.00px;top:634.33px;-webkit-text-stroke:0.22px #000;">Кроссовки беговые, размер 36</span>
<span class="t" style="font:normal 14px 'Liberation Sans', sans-serif;color:#000;letter-spacing:0.791px;left:335.60px;top:634.33px;-webkit-text-stroke:0.22px #000;">женский</span>
<span class="t" style="font:normal 14px 'Liberation Sans', sans-serif;color:#000;letter-spacing:0.571px;left:452.55px;top:634.33px;-webkit-text-stroke:0.22px #000;">бег</span>
<span class="t" style="font:normal 14.5px 'Liberation Sans', sans-serif;color:#000;letter-spacing:-0.182px;left:593.36px;top:633.88px;-webkit-text-stroke:0.22px #000;">332</span>
<span class="t" style="font:normal 14.5px 'Liberation Sans', sans-serif;color:#000;letter-spacing:-0.136px;left:682.45px;top:633.88px;-webkit-text-stroke:0.22px #000;">6 490</span>
<span class="t" style="font:normal 14.5px 'Liberation Sans', sans-serif;color:#000;letter-spacing:-0.121px;left:735.05px;top:633.88px;-webkit-text-stroke:0.22px #000;">2 154 680</span>
<span class="t" style="font:normal 14px 'Liberation Sans', sans-serif;color:#000;letter-spacing:0.383px;left:30.00px;top:655.33px;-webkit-text-stroke:0.22px #000;">Кроссовки беговые, размер 37</span>
<span class="t" style="font:normal 14px 'Liberation Sans', sans-serif;color:#000;letter-spacing:0.791px;left:335.60px;top:655.33px;-webkit-text-stroke:0.22px #000;">женский</span>
<span class="t" style="font:normal 14px 'Liberation Sans', sans-serif;color:#000;letter-spacing:0.571px;left:452.55px;top:655.33px;-webkit-text-stroke:0.22px #000;">бег</span>
<span class="t" style="font:normal 14.5px 'Liberation Sans', sans-serif;color:#000;letter-spacing:-0.182px;left:593.36px;top:654.88px;-webkit-text-stroke:0.22px #000;">333</span>
<span class="t" style="font:normal 14.5px 'Liberation Sans', sans-serif;color:#000;letter-spacing:-0.136px;left:682.45px;top:654.88px;-webkit-text-stroke:0.22px #000;">6 490</span>
<span class="t" style="font:normal 14.5px 'Liberation Sans', sans-serif;color:#000;letter-spacing:-0.121px;left:735.05px;top:654.88px;-webkit-text-stroke:0.22px #000;">2 161 170</span>
<span class="t" style="font:bold 21.6px 'Liberation Serif', serif;color:#ff0000;left:264.00px;top:247.75px;transform:scaleX(1.1102);transform-origin:left top;">Продажи спортивной обуви</span>
<div style="left:26px;top:272px;width:290px;height:24px;border:2px solid #217346;background:#fff;"></div>
<div style="left:311px;top:291px;width:6px;height:6px;background:#217346;border-left:1px solid #fff;border-top:1px solid #fff;"></div>
<div style="left:20.8px;top:266.9px;width:300.3px;height:32.9px;border:3.1px solid #ff0000;border-left-width:4px;border-radius:9px;"></div>
<div style="left:1010px;top:202px;width:20px;height:474px;background:#e6e6e6;"></div>
<div style="left:1009px;top:222px;width:1px;height:454px;background:#ababab;"></div>
<div style="left:1013px;top:219px;width:15px;height:443px;background:#dcdcdc;"></div>
<div style="left:1013px;top:204px;width:15px;height:15px;background:#ffffff;border:1px solid #b4b4b4;"></div>
<div style="left:1013px;top:219px;width:15px;height:250px;background:#ffffff;border:1px solid #ababab;"></div>
<div style="left:1013px;top:661px;width:15px;height:15px;background:#ffffff;border:1px solid #c4c4c4;"></div>
<svg style="left:1013px;top:204px;" width="15" height="15" viewBox="0 0 15 15"><path d="M4 9.5 L7.5 5 L11 9.5Z" fill="#606060"/></svg>
<svg style="left:1013px;top:661px;" width="15" height="15" viewBox="0 0 15 15"><path d="M4 5.5 L7.5 10 L11 5.5Z" fill="#606060"/></svg>
<div style="left:0px;top:675px;width:1010px;height:28px;background:#e6e6e6;"></div>
<div style="left:1010px;top:676px;width:20px;height:27px;background:#e6e6e6;"></div>
<div style="left:0px;top:675px;width:1010px;height:1px;background:#9b9b9b;"></div>
<div style="left:98px;top:679px;width:1px;height:20px;background:#ababab;"></div>
<span class="t" style="font:normal 13px 'Liberation Sans', sans-serif;color:#444444;letter-spacing:-0.091px;left:113.40px;top:681.53px;">microexcel.ru</span>
<div style="left:205px;top:675px;width:60px;height:23px;background:#ffffff;"></div>
<div style="left:264px;top:675px;width:1px;height:23px;background:#b5b5b5;"></div>
<div style="left:205px;top:697px;width:60px;height:2.6px;background:#217346;"></div>
<span class="t" style="font:bold 13px 'Liberation Sans', sans-serif;color:#217346;letter-spacing:-0.638px;left:217.00px;top:681.63px;">Лист1</span>
<svg style="left:297px;top:680px;" width="18" height="18" viewBox="0 0 18 18"><circle cx="9" cy="9" r="7.5" fill="none" stroke="#7a7a7a" stroke-width="1"/><path d="M5 9H13M9 5V13" stroke="#7a7a7a" stroke-width="1.4"/></svg>
<svg style="left:20px;top:683px;" width="40" height="12" viewBox="0 0 40 12"><path d="M9 2 L5 6 L9 10Z M35 2 L39 6 L35 10Z" fill="#c0c0c0"/></svg>
<div style="left:635px;top:682px;width:15px;height:15px;background:#ffffff;border:1px solid #c9c9c9;"></div>
<div style="left:650px;top:682px;width:301px;height:15px;background:#ffffff;border:1px solid #ababab;"></div>
<div style="left:952px;top:682px;width:43px;height:15px;background:#dcdcdc;"></div>
<div style="left:997px;top:682px;width:15px;height:15px;background:#ffffff;border:1px solid #c9c9c9;"></div>
<svg style="left:635px;top:682px;" width="15" height="15" viewBox="0 0 15 15"><path d="M9.6 4 L5.3 7.5 L9.6 11Z" fill="#666"/></svg>
<svg style="left:997px;top:682px;" width="15" height="15" viewBox="0 0 15 15"><path d="M5.8 4 L10.2 7.5 L5.8 11Z" fill="#666"/></svg>
<svg style="left:617px;top:683px;" width="4" height="14" viewBox="0 0 4 14"><rect x="1" y="1" width="2" height="2" fill="#a0a0a0"/><rect x="1" y="5" width="2" height="2" fill="#a0a0a0"/><rect x="1" y="9" width="2" height="2" fill="#a0a0a0"/></svg>
<div style="left:0px;top:703px;width:1030px;height:22px;background:#f3f3f3;"></div>
<div style="left:0px;top:703px;width:1030px;height:1px;background:#c9c9c9;"></div>
<div style="left:731px;top:704px;width:38px;height:21px;background:#c6c6c6;"></div>
<span class="t" style="font:normal 12px 'Liberation Sans', sans-serif;color:#444;left:982.50px;top:707.14px;transform:scaleX(0.8669);transform-origin:left top;">100 %</span>
<div style="left:860px;top:713px;width:100px;height:1px;background:#9a9a9a;"></div>
<div style="left:908px;top:708px;width:5px;height:11px;background:#6a6a6a;"></div>
<div style="left:850px;top:713px;width:6px;height:2px;background:#6a6a6a;"></div>
<svg style="left:964px;top:709px;" width="8" height="9" viewBox="0 0 8 9"><path d="M0 4.5H7M3.5 1V8" stroke="#606060" stroke-width="1.8"/></svg>
<svg style="left:743px;top:707px;" width="14" height="13" viewBox="0 0 14 13"><rect x="0.5" y="0.5" width="13" height="12" fill="none" stroke="#6a6a6a"/><path d="M4.5 0.5V12.5M9.5 0.5V12.5M0.5 4.5H13.5M0.5 8.5H13.5" stroke="#6a6a6a"/></svg>
<svg style="left:781px;top:707px;" width="15" height="13" viewBox="0 0 15 13"><rect x="0.5" y="0.5" width="14" height="12" fill="none" stroke="#6a6a6a"/><rect x="3.5" y="3.5" width="8" height="7" fill="none" stroke="#6a6a6a"/><path d="M5 5.5H10M5 7H10M5 8.5H10" stroke="#6a6a6a" stroke-width="0.8"/></svg>
<svg style="left:819px;top:706px;" width="14" height="14" viewBox="0 0 14 14"><path d="M0.5 0.5H13.5V13.5H0.5Z" fill="none" stroke="#6a6a6a"/><path d="M0.5 8.5H7.5V0.5" fill="none" stroke="#6a6a6a"/></svg>
<svg style="left:6px;top:707px;" width="14" height="14" viewBox="0 0 14 14"><circle cx="3.1" cy="3.2" r="3" fill="#595959"/><rect x="7.5" y="1" width="6" height="2.6" fill="#595959"/><path d="M1.5 7.5V12.5H12.5V1.5" fill="none" stroke="#595959" stroke-width="1.2"/><path d="M6.2 6.6H8.2M9.4 6.6H11.2M3.2 8.6H5.2M6.2 8.6H8.2M9.4 8.6H11.2M3.2 10.6H5.2M6.2 10.6H8.2M9.4 10.6H11.2" stroke="#595959" stroke-width="1"/></svg>
<div style="left:582px;top:136px;width:305px;height:156px;background:#fff;border:1px solid #c6c6c6;box-shadow:1px 1px 2px rgba(0,0,0,.22);"></div>
<div style="left:583px;top:137px;width:302px;height:50px;background:#c6c6c6;"></div>
<span class="t" style="font:bold 12px 'Liberation Sans', sans-serif;color:#262626;letter-spacing:-0.256px;left:636.00px;top:140.14px;">Закрепить области</span>
<span class="t" style="font:normal 12px 'Liberation Sans', sans-serif;color:#262626;letter-spacing:-0.092px;left:636.00px;top:157.14px;">Выделенные строки и столбцы всегда будут</span>
<span class="t" style="font:normal 12px 'Liberation Sans', sans-serif;color:#262626;letter-spacing:-0.030px;left:636.00px;top:172.14px;">видны на экране во время прокрутки листа.</span>
<span class="t" style="font:bold 12px 'Liberation Sans', sans-serif;color:#444444;letter-spacing:-0.092px;left:636.00px;top:191.14px;">Закрепить верхнюю строку</span>
<span class="t" style="font:normal 12px 'Liberation Sans', sans-serif;color:#444444;letter-spacing:-0.255px;left:636.00px;top:208.14px;">Верхняя строка всегда будет видна на</span>
<span class="t" style="font:normal 12px 'Liberation Sans', sans-serif;color:#444444;letter-spacing:0.016px;left:636.00px;top:223.14px;">экране во время прокрутки листа.</span>
<span class="t" style="font:bold 12px 'Liberation Sans', sans-serif;color:#444444;letter-spacing:-0.146px;left:636.00px;top:242.14px;">Закрепить первый столбец</span>
<span class="t" style="font:normal 12px 'Liberation Sans', sans-serif;color:#444444;letter-spacing:-0.163px;left:636.00px;top:259.14px;">Первый столбец всегда будет виден на</span>
<span class="t" style="font:normal 12px 'Liberation Sans', sans-serif;color:#444444;letter-spacing:0.016px;left:636.00px;top:273.64px;">экране во время прокрутки листа.</span>
<svg style="left:592px;top:149px;" width="28" height="25" viewBox="0 0 28 25"><path d="M0.5 20.5V24.5H8.5L9.5 23V20.5M10.5 20.5V23L11.5 24.5H16.5L19.5 20.5" fill="#fff" stroke="#808080"/><rect x="0.5" y="0.5" width="27" height="20" fill="#fff" stroke="#808080"/><path d="M9.5 0.5V20.5M18.5 0.5V20.5M0.5 5.5H27.5M0.5 10.5H27.5M0.5 15.5H27.5" fill="none" stroke="#9a9a9a"/><path d="M1 5 L9 1" stroke="#5ba3d9" stroke-width="1"/><path d="M10 5 L18 1" stroke="#5ba3d9" stroke-width="1"/><path d="M19 5 L27 1" stroke="#5ba3d9" stroke-width="1"/><path d="M1 10 L9 6" stroke="#5ba3d9" stroke-width="1"/><path d="M1 15 L9 11" stroke="#5ba3d9" stroke-width="1"/><path d="M1 20 L9 16" stroke="#5ba3d9" stroke-width="1"/><rect x="10" y="6" width="8" height="4" fill="#1e73b9"/></svg>
<svg style="left:592px;top:200px;" width="28" height="25" viewBox="0 0 28 25"><path d="M0.5 20.5V24.5H8.5L9.5 23V20.5M10.5 20.5V23L11.5 24.5H16.5L19.5 20.5" fill="#fff" stroke="#808080"/><rect x="0.5" y="0.5" width="27" height="20" fill="#fff" stroke="#808080"/><path d="M9.5 0.5V20.5M18.5 0.5V20.5M0.5 5.5H27.5M0.5 10.5H27.5M0.5 15.5H27.5" fill="none" stroke="#9a9a9a"/><path d="M1 5 L9 1" stroke="#5ba3d9" stroke-width="1"/><path d="M10 5 L18 1" stroke="#5ba3d9" stroke-width="1"/><path d="M19 5 L27 1" stroke="#5ba3d9" stroke-width="1"/></svg>
<svg style="left:592px;top:251px;" width="28" height="25" viewBox="0 0 28 25"><path d="M0.5 20.5V24.5H8.5L9.5 23V20.5M10.5 20.5V23L11.5 24.5H16.5L19.5 20.5" fill="#fff" stroke="#808080"/><rect x="0.5" y="0.5" width="27" height="20" fill="#fff" stroke="#808080"/><path d="M9.5 0.5V20.5M18.5 0.5V20.5M0.5 5.5H27.5M0.5 10.5H27.5M0.5 15.5H27.5" fill="none" stroke="#9a9a9a"/><path d="M1 10 L9 6" stroke="#5ba3d9" stroke-width="1"/><path d="M1 15 L9 11" stroke="#5ba3d9" stroke-width="1"/><path d="M1 20 L9 16" stroke="#5ba3d9" stroke-width="1"/></svg>
<div style="left:636.5px;top:153px;width:5.5px;height:1px;background:#262626;"></div>
<div style="left:721px;top:204px;width:7px;height:1px;background:#444;"></div>
<div style="left:739px;top:255px;width:7.5px;height:1px;background:#444;"></div>
<div style="left:601px;top:32.8px;width:47px;height:30.4px;border:3.1px solid #ff0000;border-radius:9px;"></div>
<div style="left:581px;top:109.6px;width:145px;height:27px;border:3.2px solid #ff0000;border-radius:9px;"></div>
<div style="left:584.2px;top:137px;width:299px;height:50.5px;border:3px solid #ff0000;border-radius:8px;"></div>
<div style="left:0;top:0;width:1030px;height:725px;border:1px solid #bdbdbd;"></div>
</div></body></html>
